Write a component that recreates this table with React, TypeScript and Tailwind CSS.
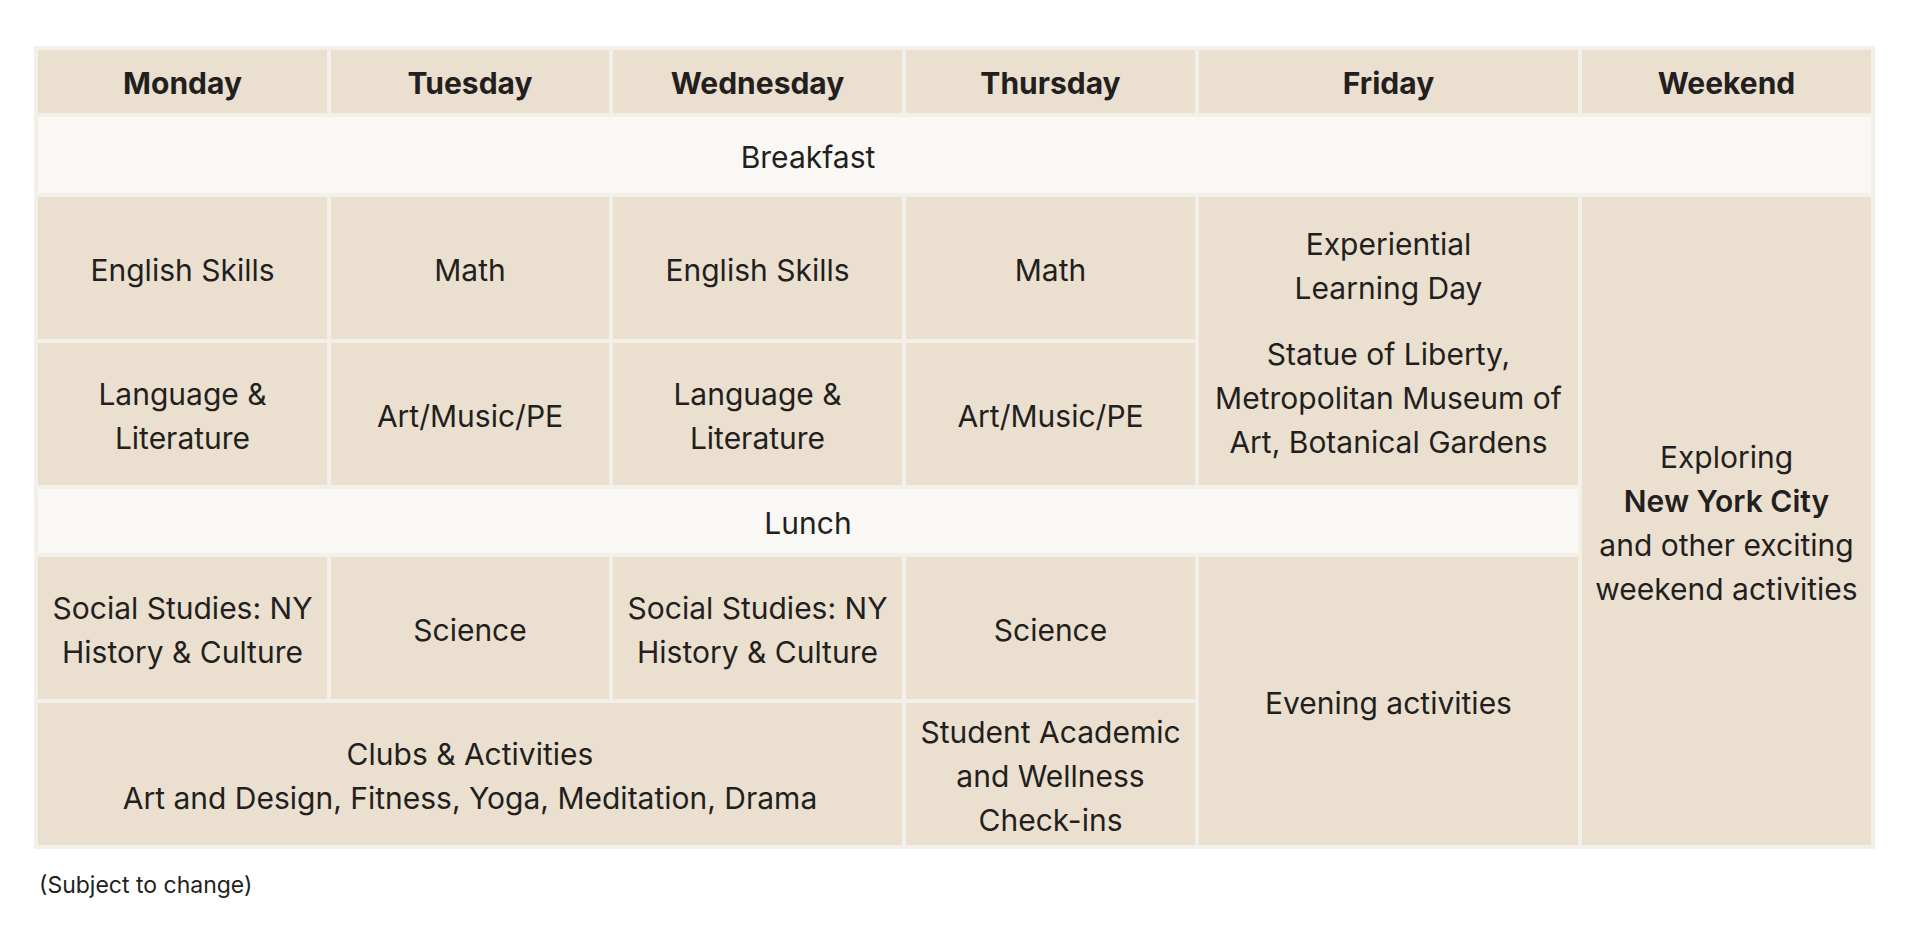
import React from 'react';

const cell = 'flex flex-col items-center justify-center text-center bg-[#ebe0cf] px-2 pt-[3px]';
const meal = 'flex items-center justify-center text-center bg-[#f9f8f4] pt-[3px]';

const days = ['Monday', 'Tuesday', 'Wednesday', 'Thursday', 'Friday', 'Weekend'];

const App: React.FC = () => {
  return (
    <div
      className="min-h-screen bg-white pt-[46px] pl-[34px] text-[#231f20]"
      style={{ fontFamily: 'Inter, "Noto Sans", sans-serif' }}
    >
      <div className="grid w-fit grid-cols-[289px_278px_289px_289px_379px_289px] grid-rows-[63px_76px_142px_142px_64px_142px_142px] gap-1 bg-[#f3f0e9] p-1 text-[30px] leading-[44px]">
        {/* header row */}
        {days.map((day) => (
          <div key={day} className={`${cell} font-bold`}>
            {day}
          </div>
        ))}

        {/* breakfast spans the whole week, text sits over Mon-Fri */}
        <div className={`${meal} col-span-6 pr-[293px]`}>Breakfast</div>

        {/* morning block 1 */}
        <div className={cell}>English Skills</div>
        <div className={cell}>Math</div>
        <div className={cell}>English Skills</div>
        <div className={cell}>Math</div>
        <div className={`${cell} row-span-2 gap-[22px]`}>
          <p>
            Experiential
            <br />
            Learning Day
          </p>
          <p>
            Statue of Liberty,
            <br />
            Metropolitan Museum of
            <br />
            Art, Botanical Gardens
          </p>
        </div>
        <div className={`${cell} row-span-5`}>
          <p>
            Exploring
            <br />
            <span className="font-semibold">New York City</span>
            <br />
            and other exciting
            <br />
            weekend activities
          </p>
        </div>

        {/* morning block 2 */}
        <div className={cell}>
          <p>
            Language &amp;
            <br />
            Literature
          </p>
        </div>
        <div className={cell}>Art/Music/PE</div>
        <div className={cell}>
          <p>
            Language &amp;
            <br />
            Literature
          </p>
        </div>
        <div className={cell}>Art/Music/PE</div>

        <div className={`${meal} col-span-5`}>Lunch</div>

        {/* afternoon */}
        <div className={cell}>
          <p>
            Social Studies: NY
            <br />
            History &amp; Culture
          </p>
        </div>
        <div className={cell}>Science</div>
        <div className={cell}>
          <p>
            Social Studies: NY
            <br />
            History &amp; Culture
          </p>
        </div>
        <div className={cell}>Science</div>
        <div className={`${cell} row-span-2`}>Evening activities</div>

        <div className={`${cell} col-span-3`}>
          <p>
            Clubs &amp; Activities
            <br />
            Art and Design, Fitness, Yoga, Meditation, Drama
          </p>
        </div>
        <div className={cell}>
          <p>
            Student Academic
            <br />
            and Wellness
            <br />
            Check-ins
          </p>
        </div>
      </div>

      <p className="mt-[20px] pl-[5px] text-[23px] leading-[33px]">(Subject to change)</p>
    </div>
  );
};

export default App;
